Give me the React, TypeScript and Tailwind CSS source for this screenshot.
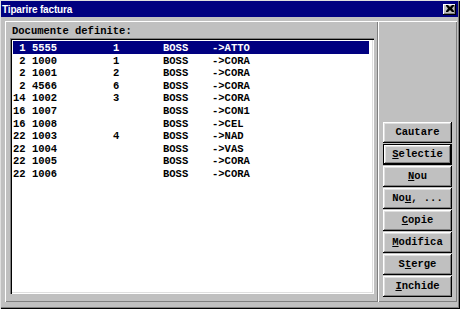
import React from "react";

const rows: [string, string, string, string, string][] = [
  [" 1", "5555", "1", "BOSS", "->ATTO"],
  [" 2", "1000", "1", "BOSS", "->CORA"],
  [" 2", "1001", "2", "BOSS", "->CORA"],
  [" 2", "4566", "6", "BOSS", "->CORA"],
  ["14", "1002", "3", "BOSS", "->CORA"],
  ["16", "1007", "", "BOSS", "->CON1"],
  ["16", "1008", "", "BOSS", "->CEL"],
  ["22", "1003", "4", "BOSS", "->NAD"],
  ["22", "1004", "", "BOSS", "->VAS"],
  ["22", "1005", "", "BOSS", "->CORA"],
  ["22", "1006", "", "BOSS", "->CORA"],
];

const btn =
  "h-[21px] w-full flex items-center justify-center bg-[#c0c0c0] text-black shadow-[inset_-1px_-1px_0_#000,inset_1px_1px_0_#fff,inset_-2px_-2px_0_#808080,inset_2px_2px_0_#dfdfdf]";
const btnDefault =
  "h-[21px] w-full flex items-center justify-center bg-[#c0c0c0] text-black shadow-[inset_0_0_0_1px_#000,inset_-2px_-2px_0_#000,inset_2px_2px_0_#fff,inset_-3px_-3px_0_#808080,inset_3px_3px_0_#dfdfdf]";

export default function App() {
  return (
    <div className="w-[460px] h-[309px] bg-[#c0c0c0] pt-[1px] pl-[1px] pr-[2px] pb-[2px] flex flex-col shadow-[inset_1px_1px_0_#dfdfdf,inset_-1px_-1px_0_#000,inset_-2px_-2px_0_#808080] overflow-hidden">
      {/* Title bar */}
      <div className="h-[16px] bg-[#000080] flex items-center justify-between pl-[1px] pr-[2px]">
        <span className="text-white font-bold text-[10px] tracking-[-0.15px] leading-none font-['Liberation_Sans',Arial,sans-serif] pt-[1px]">
          Tiparire factura
        </span>
        <div className="w-[13px] h-[11px] bg-[#c0c0c0] flex items-center justify-center shadow-[inset_-1px_-1px_0_#000,inset_1px_1px_0_#fff,inset_-2px_-2px_0_#808080]">
          <svg width="8" height="7" viewBox="0 0 8 7" className="mb-[1px]">
            <path d="M0 0h2l2 2 2-2h2v1L6 3.5 8 6v1H6L4 5 2 7H0V6l2-2.5L0 1z" fill="#000" />
          </svg>
        </div>
      </div>

      {/* Body */}
      <div className="flex-1 flex pt-[4px] pl-[4px] pr-[1px] pb-[5px] font-['Liberation_Mono','Courier_New',monospace] font-bold text-[10.5px]">
        {/* Left panel */}
        <div className="w-[373px] flex flex-col pt-[4px] pl-[5px] pr-[4px] pb-[8px] shadow-[inset_1px_1px_0_#fff,inset_-1px_-1px_0_#808080]">
          <div className="h-[12px] leading-[12px] pl-[2px] text-black whitespace-pre">Documente definite:</div>
          <div className="mt-[1px] flex-1 bg-white p-[2px] shadow-[inset_1px_1px_0_#808080,inset_2px_2px_0_#000,inset_-1px_-1px_0_#fff,inset_-2px_-2px_0_#dfdfdf]">
            <div className="pt-[1px] pl-[1px] pr-[3px] flex flex-col">
              {rows.map((r, i) => {
                const sel = i === 0;
                return (
                  <div
                    key={i}
                    className={
                      "h-[12.6px] leading-[12.6px] flex whitespace-pre pt-[1px] " +
                      (sel ? "bg-[#000080] text-white" : "text-black")
                    }
                  >
                    <span className="w-[100px] shrink-0">{r[0] + " " + r[1]}</span>
                    <span className="w-[50px] shrink-0">{r[2]}</span>
                    <span className="w-[49px] shrink-0">{r[3]}</span>
                    <span>{r[4]}</span>
                  </div>
                );
              })}
            </div>
          </div>
        </div>

        {/* Right panel */}
        <div className="w-[79px] flex flex-col justify-end gap-[1px] px-[5px] pb-[5px] shadow-[inset_1px_1px_0_#fff,inset_-1px_-1px_0_#808080]">
          <div className={btn}>Cautare</div>
          <div className={btnDefault}>
            <span><u>S</u>electie</span>
          </div>
          <div className={btn}>
            <span><u>N</u>ou</span>
          </div>
          <div className={btn}>
            <span className="whitespace-pre">No<u>u</u>, ...</span>
          </div>
          <div className={btn}>
            <span><u>C</u>opie</span>
          </div>
          <div className={btn}>
            <span><u>M</u>odifica</span>
          </div>
          <div className={btn}>
            <span>S<u>t</u>erge</span>
          </div>
          <div className={btn}>
            <span><u>I</u>nchide</span>
          </div>
        </div>
      </div>
    </div>
  );
}
